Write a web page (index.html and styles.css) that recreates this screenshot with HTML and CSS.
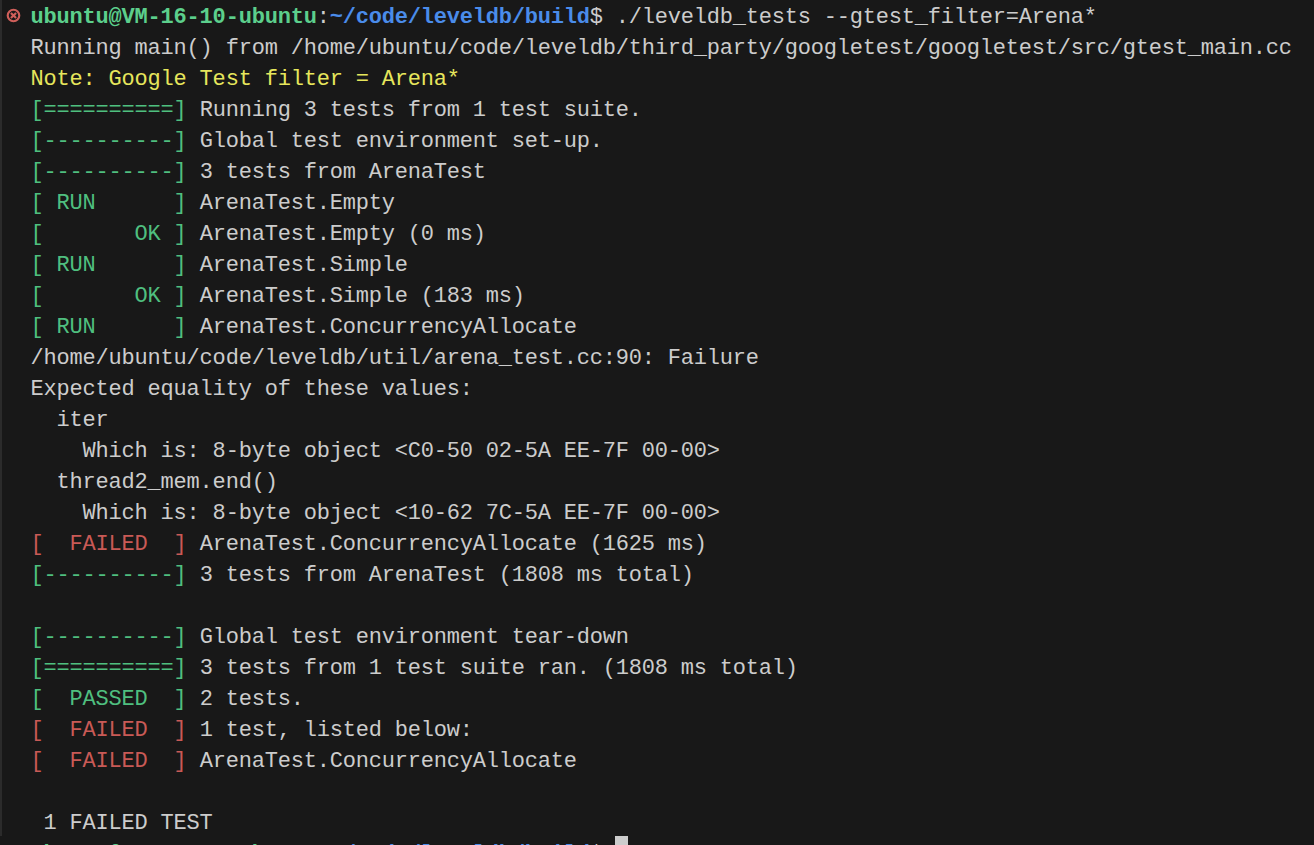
FILE: index.html
```html
<!DOCTYPE html>
<html lang="en">
<head>
<meta charset="utf-8">
<title>Terminal</title>
<link rel="stylesheet" href="styles.css">
</head>
<body>
<div class="gutter"></div>
<main class="terminal">
<svg class="status" viewBox="0 0 14 14" aria-hidden="true"><circle cx="7" cy="7" r="5.4"/><path d="M4.6 4.6l4.8 4.8M9.4 4.6l-4.8 4.8"/></svg>
<pre class="output"><b class="pg">ubuntu@VM-16-10-ubuntu</b>:<b class="b">~/code/leveldb/build</b>$ ./leveldb_tests --gtest_filter=Arena*
Running main() from /home/ubuntu/code/leveldb/third_party/googletest/googletest/src/gtest_main.cc
<span class="y">Note: Google Test filter = Arena*</span>
<span class="g">[==========]</span> Running 3 tests from 1 test suite.
<span class="g">[----------]</span> Global test environment set-up.
<span class="g">[----------]</span> 3 tests from ArenaTest
<span class="g">[ RUN      ]</span> ArenaTest.Empty
<span class="g">[       OK ]</span> ArenaTest.Empty (0 ms)
<span class="g">[ RUN      ]</span> ArenaTest.Simple
<span class="g">[       OK ]</span> ArenaTest.Simple (183 ms)
<span class="g">[ RUN      ]</span> ArenaTest.ConcurrencyAllocate
/home/ubuntu/code/leveldb/util/arena_test.cc:90: Failure
Expected equality of these values:
  iter
    Which is: 8-byte object &lt;C0-50 02-5A EE-7F 00-00&gt;
  thread2_mem.end()
    Which is: 8-byte object &lt;10-62 7C-5A EE-7F 00-00&gt;
<span class="r">[  FAILED  ]</span> ArenaTest.ConcurrencyAllocate (1625 ms)
<span class="g">[----------]</span> 3 tests from ArenaTest (1808 ms total)

<span class="g">[----------]</span> Global test environment tear-down
<span class="g">[==========]</span> 3 tests from 1 test suite ran. (1808 ms total)
<span class="g">[  PASSED  ]</span> 2 tests.
<span class="r">[  FAILED  ]</span> 1 test, listed below:
<span class="r">[  FAILED  ]</span> ArenaTest.ConcurrencyAllocate

 1 FAILED TEST
<span class="last"><b class="pg">ubuntu@VM-16-10-ubuntu</b>:<b class="b">~/code/leveldb/build</b>$ <span class="cursor"></span></span></pre>
</main>
</body>
</html>
```
FILE: styles.css
```css
html, body {
  margin: 0;
  height: 100%;
  background: #181818;
}
body {
  display: flex;
  overflow: hidden;
}
.gutter {
  flex: none;
  width: 2px;
  height: 836px;
  background: #2b2b2b;
}
.terminal {
  position: relative;
  flex: 1;
  min-width: 0;
  padding: 2px 0 0 28.6px;
  overflow: hidden;
}
.status {
  position: absolute;
  left: 4px;
  top: 8px;
  width: 15px;
  height: 15px;
  fill: none;
  stroke: #cf5f5a;
  stroke-width: 2;
}
.output {
  margin: 0;
  font-family: "Liberation Mono", "DejaVu Sans Mono", monospace;
  font-size: 22px;
  letter-spacing: -0.2px;
  line-height: 31px;
  color: #cccccc;
}
.last {
  display: block;
}
.g { color: #4fbf7f; }
.pg { color: #5ccf8c; }
.b { color: #4a8cea; }
.y { color: #e6e65c; }
.r { color: #c95a56; }
.cursor {
  display: inline-block;
  vertical-align: top;
  width: 13px;
  height: 31px;
  margin: -3px 0 0 -0.5px;
  background: #cccccc;
}
```
